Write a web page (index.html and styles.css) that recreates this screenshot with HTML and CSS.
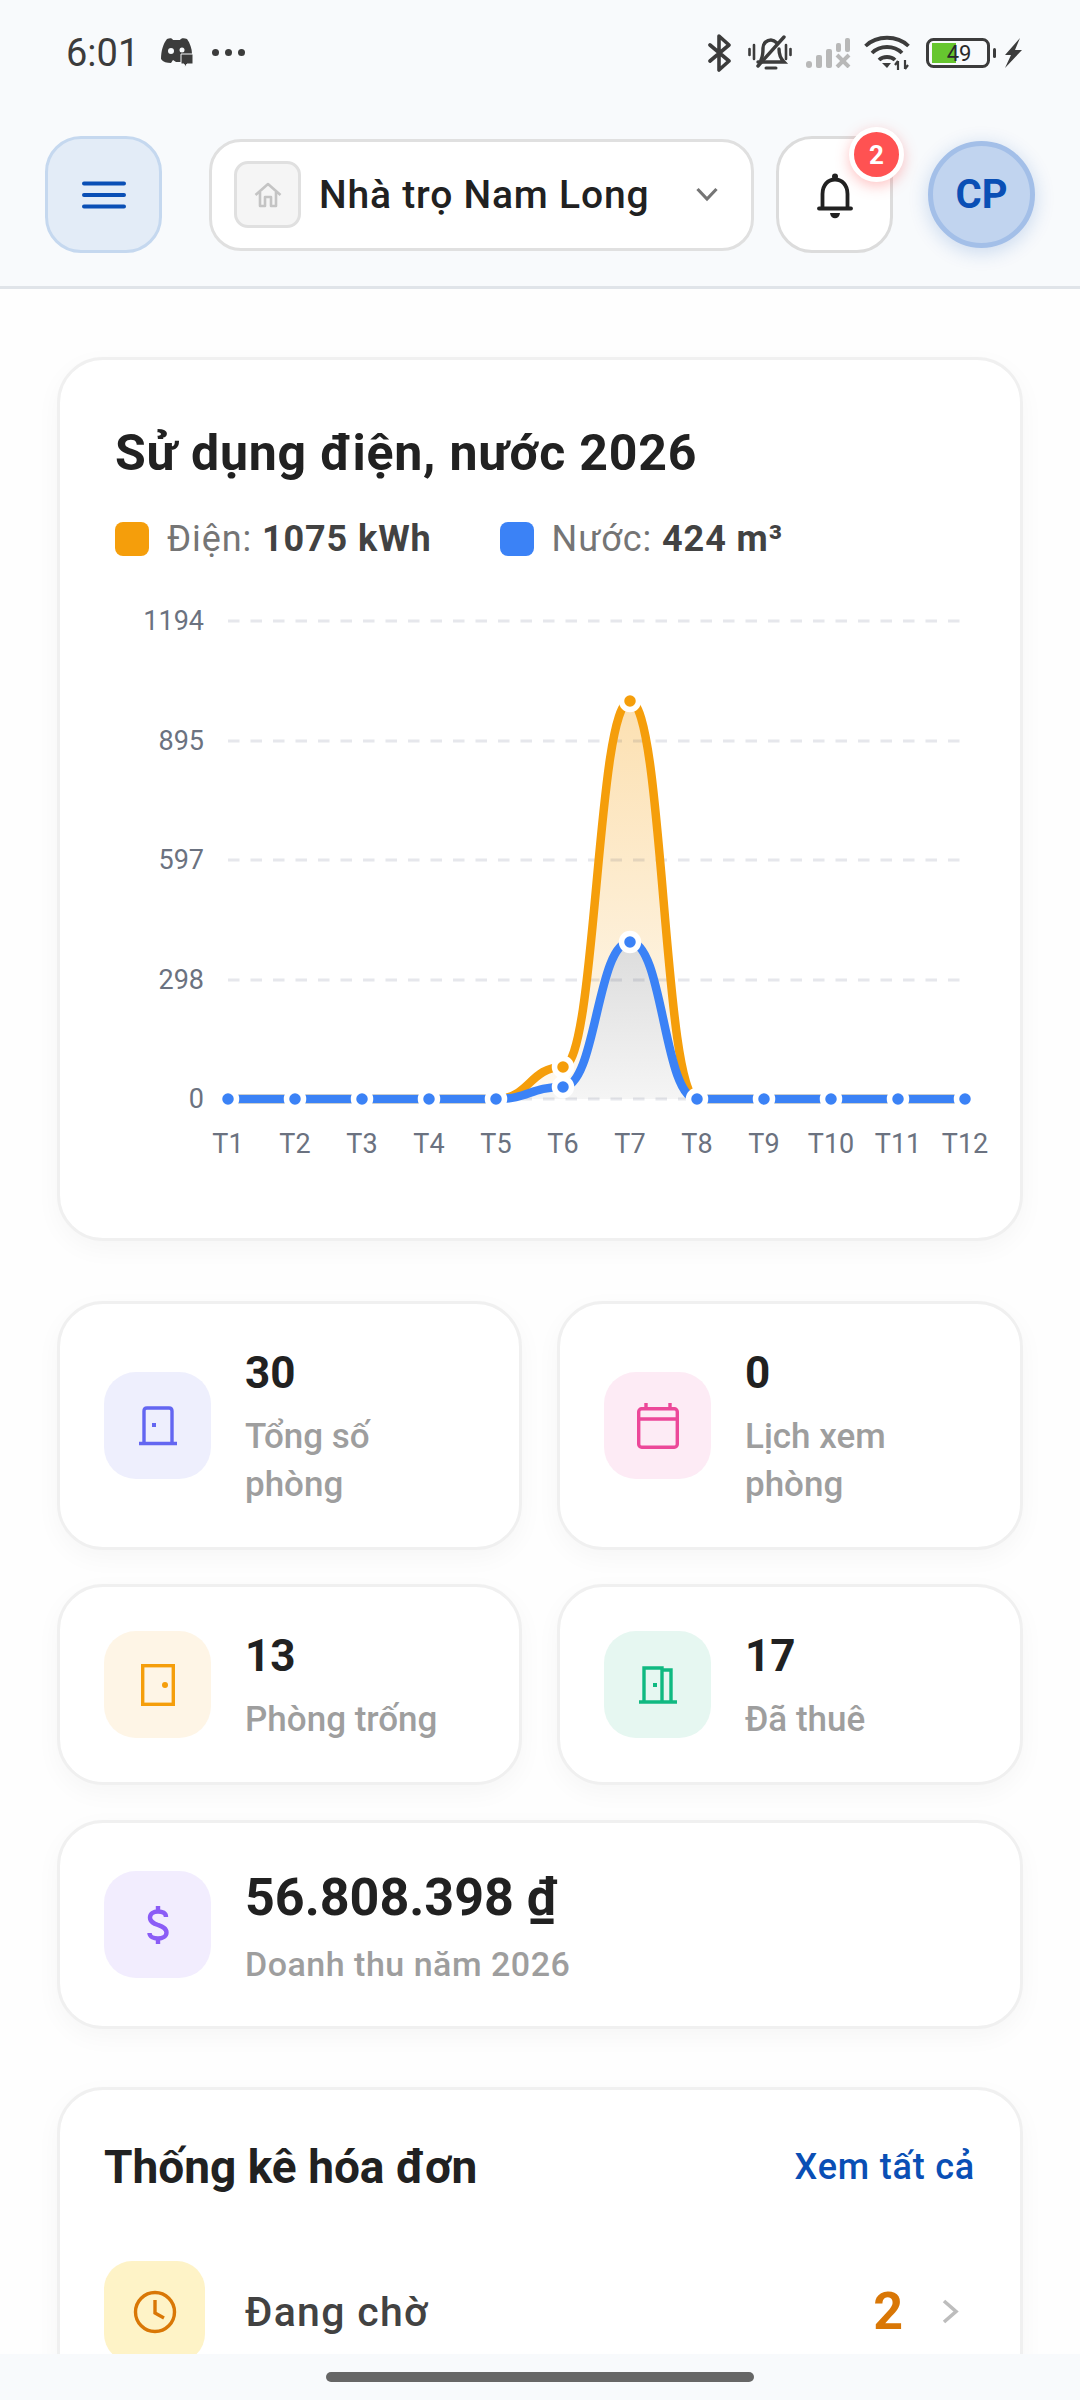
FILE: index.html
```html
<!DOCTYPE html>
<html lang="vi">
<head>
  <meta charset="UTF-8">
  <meta name="viewport" content="width=device-width, initial-scale=1.0">
  <title>Nhà trọ Nam Long</title>
  <link rel="stylesheet" href="styles.css">
</head>
<body>
<div class="screen">

  <div class="top">
    <div class="status-bar">
      <span class="clock">6:01</span>
      <svg class="st-discord" width="34" height="30" viewBox="0 0 34 30">
        <path fill="#3c3c3c" d="M7 2 C10 1 12 1 13 3 H20 C21 1 24 1 27 2 C30 6 32 12 32 17 H24 V25 H16 L13 23 L11 26 C7 26 3 25 1 22 C1 14 3 7 7 2 Z"/>
        <circle cx="11" cy="14" r="3" fill="#f8fafc"/>
        <circle cx="22" cy="13" r="2.5" fill="#f8fafc"/>
        <path fill="#3c3c3c" d="M21 17 H33 V27 H27 L25 30 L24 27 H21 Z" stroke="#f8fafc" stroke-width="1"/>
      </svg>
      <span class="st-dots"><i></i><i></i><i></i></span>
      <span class="st-right">
        <svg width="24" height="40" viewBox="0 0 24 40" fill="none" stroke="#3c3c3c" stroke-width="3.6" stroke-linejoin="round" stroke-linecap="round">
          <path d="M2 12 L21 28 L11 37 V3 L21 12 L2 28"/>
        </svg>
        <svg class="st-mute" width="44" height="38" viewBox="0 0 44 38" fill="none" stroke="#3c3c3c" stroke-width="3.4" stroke-linecap="round">
          <path d="M13 26 C15 22 15 18 15 14 C15 9 19 6 23 6 C25 6 27 7 29 9"/>
          <path d="M31 15 C31 20 32 24 36 28 H10"/>
          <path d="M10 32 L36 3"/>
          <path d="M18 34 H28" stroke-width="3"/>
          <path d="M1.5 15 V21 M6 11 V25 M38 11 V25 M42.5 15 V21" stroke-width="2.6"/>
        </svg>
        <svg class="st-signal" width="45" height="30" viewBox="0 0 45 30" fill="#b8b8b8">
          <rect x="0" y="23" width="6" height="7" rx="3"/>
          <rect x="10" y="17" width="6" height="13" rx="2"/>
          <rect x="20" y="11" width="6" height="19" rx="2"/>
          <rect x="30" y="5" width="5" height="9" rx="2"/>
          <rect x="39" y="0" width="5" height="14" rx="2"/>
          <path d="M31 17 L43 29 M43 17 L31 29" stroke="#b8b8b8" stroke-width="4" fill="none"/>
        </svg>
        <svg class="st-wifi" width="46" height="36" viewBox="0 0 46 36" fill="none" stroke="#3c3c3c" stroke-width="3.8">
          <path d="M1.5 11 C13 0 33 0 44.5 11"/>
          <path d="M8 18 C16 10 30 10 38 18"/>
          <path d="M15 25 C19 21 27 21 31 25"/>
          <path d="M18 28 L23 33 L27 28 Z" fill="#3c3c3c" stroke="none"/>
          <path d="M34 26 V35 M31 30 L34 26 M41 25 V34 M41 34 L44 30" stroke-width="2.2"/>
        </svg>
        <svg class="st-battery" width="70" height="30" viewBox="0 0 70 30">
          <rect x="1.5" y="1.5" width="61" height="27" rx="6" fill="none" stroke="#3c3c3c" stroke-width="3"/>
          <rect x="6" y="5" width="24" height="20" fill="#66c62f"/>
          <rect x="67" y="10" width="3" height="10" rx="1.5" fill="#3c3c3c"/>
          <text class="batt-text" x="33" y="23" text-anchor="middle">49</text>
        </svg>
        <svg width="19" height="30" viewBox="0 0 19 30">
          <path fill="#3c3c3c" d="M17 0 L2 17 H8 L2 30 L19 12 H12 Z"/>
        </svg>
      </span>
    </div>

    <header class="app-header">
      <div class="menu-btn">
        <svg width="44" height="30" viewBox="0 0 44 30" stroke="#0a4fb5" stroke-width="4" stroke-linecap="round">
          <path d="M2 3.5 H42 M2 15 H42 M2 26.5 H42"/>
        </svg>
      </div>
      <div class="house-select">
        <span class="house-icon">
          <svg width="28" height="26" viewBox="0 0 28 26" fill="none" stroke="#c4c4c4" stroke-width="2.6" stroke-linejoin="round">
            <path d="M1.5 13 L14 2 L26.5 13 M6 10 V24 H11 V15 H17 V24 H22 V10"/>
          </svg>
        </span>
        <span class="house-name">Nhà trọ Nam Long</span>
        <svg class="caret" width="22" height="15" viewBox="0 0 22 15" fill="none" stroke="#757575" stroke-width="3.2">
          <path d="M1.5 2 L11 12 L20.5 2"/>
        </svg>
      </div>
      <div class="bell-btn">
        <svg width="36" height="46" viewBox="0 0 36 46" fill="none" stroke="#212121" stroke-width="3.8" stroke-linecap="round">
          <path d="M5.5 34 V21 C5.5 12 11 6.5 18 6.5 C25 6.5 30.5 12 30.5 21 V34"/>
          <path d="M2 35.5 H34"/>
          <circle cx="18" cy="3.5" r="3" fill="#212121" stroke="none"/>
          <path d="M13 40 H23 C22.5 47 13.5 47 13 40 Z" fill="#212121" stroke="none"/>
        </svg>
        <span class="bell-badge">2</span>
      </div>
      <div class="avatar">CP</div>
    </header>
  </div>

  <main class="content">
    <section class="card chart-card">
      <h2 class="chart-title">Sử dụng điện, nước 2026</h2>
      <div class="legend">
        <span class="legend-item"><i class="swatch swatch-orange"></i><span>Điện: <b>1075 kWh</b></span></span>
        <span class="legend-item"><i class="swatch swatch-blue"></i><span>Nước: <b>424 m³</b></span></span>
      </div>
      <svg class="chart" width="884" height="580" viewBox="116 600 884 580">
        <defs>
          <linearGradient id="fillDien" x1="0" y1="701" x2="0" y2="1099" gradientUnits="userSpaceOnUse">
            <stop offset="0" stop-color="#f59e0b" stop-opacity="0.32"/>
            <stop offset="1" stop-color="#f59e0b" stop-opacity="0.06"/>
          </linearGradient>
          <linearGradient id="fillNuoc" x1="0" y1="942" x2="0" y2="1099" gradientUnits="userSpaceOnUse">
            <stop offset="0" stop-color="#dcdcdc"/>
            <stop offset="1" stop-color="#f5f5f5"/>
          </linearGradient>
        </defs>

        <path fill="url(#fillDien)" d="M496 1099 C529.5 1099 529.5 1067 563 1067 C596.5 1067 596.5 701 630 701 C663.5 701 663.5 1099 697 1099 Z"/>
        <path fill="url(#fillNuoc)" d="M496 1099 C529.5 1099 529.5 1087 563 1087 C596.5 1087 596.5 942 630 942 C663.5 942 663.5 1099 697 1099 Z"/>

        <g class="grid-lines">
          <path d="M228 621 H960"/>
          <path d="M228 741 H960"/>
          <path d="M228 860 H960"/>
          <path d="M228 980 H960"/>
          <path d="M228 1099 H960"/>
        </g>

        <g class="y-labels">
          <text x="204" y="630">1194</text>
          <text x="204" y="750">895</text>
          <text x="204" y="869">597</text>
          <text x="204" y="989">298</text>
          <text x="204" y="1108">0</text>
        </g>
        <g class="x-labels">
          <text x="228" y="1153">T1</text>
          <text x="295" y="1153">T2</text>
          <text x="362" y="1153">T3</text>
          <text x="429" y="1153">T4</text>
          <text x="496" y="1153">T5</text>
          <text x="563" y="1153">T6</text>
          <text x="630" y="1153">T7</text>
          <text x="697" y="1153">T8</text>
          <text x="764" y="1153">T9</text>
          <text x="831" y="1153">T10</text>
          <text x="898" y="1153">T11</text>
          <text x="965" y="1153">T12</text>
        </g>

        <path class="line line-orange" d="M228 1099 H496 C529.5 1099 529.5 1067 563 1067 C596.5 1067 596.5 701 630 701 C663.5 701 663.5 1099 697 1099 H965"/>
        <g class="dots dots-orange">
          <circle cx="563" cy="1067" r="8.500"/>
          <circle cx="630" cy="701" r="8.500"/>
        </g>
        <path class="line line-blue" d="M228 1099 H496 C529.5 1099 529.5 1087 563 1087 C596.5 1087 596.5 942 630 942 C663.5 942 663.5 1099 697 1099 H965"/>
        <g class="dots dots-blue">
          <circle cx="228" cy="1099" r="8.500"/>
          <circle cx="295" cy="1099" r="8.500"/>
          <circle cx="362" cy="1099" r="8.500"/>
          <circle cx="429" cy="1099" r="8.500"/>
          <circle cx="496" cy="1099" r="8.500"/>
          <circle cx="563" cy="1087" r="8.500"/>
          <circle cx="630" cy="942" r="8.500"/>
          <circle cx="697" cy="1099" r="8.500"/>
          <circle cx="764" cy="1099" r="8.500"/>
          <circle cx="831" cy="1099" r="8.500"/>
          <circle cx="898" cy="1099" r="8.500"/>
          <circle cx="965" cy="1099" r="8.500"/>
        </g>
      </svg>
    </section>

    <section class="stats">
      <div class="card stat">
        <span class="stat-icon bg-indigo">
          <svg width="40" height="40" viewBox="0 0 40 40" fill="none" stroke="#6366f1" stroke-width="3.4">
            <path d="M6 37 V5 C6 3 7 2 9 2 H31 C33 2 34 3 34 5 V37"/>
            <path d="M1 37.5 H39"/>
            <rect x="14" y="17" width="4" height="4" fill="#6366f1" stroke="none"/>
          </svg>
        </span>
        <div class="stat-text">
          <div class="stat-num">30</div>
          <div class="stat-label">Tổng số<br>phòng</div>
        </div>
      </div>
      <div class="card stat">
        <span class="stat-icon bg-pink">
          <svg width="42" height="46" viewBox="0 0 42 46" fill="none" stroke="#ec4899" stroke-width="3.4">
            <rect x="1.7" y="5.7" width="38.6" height="38.6" rx="3"/>
            <path d="M2 16 H40 M9 0 V6 M33 0 V6"/>
          </svg>
        </span>
        <div class="stat-text">
          <div class="stat-num">0</div>
          <div class="stat-label">Lịch xem<br>phòng</div>
        </div>
      </div>
      <div class="card stat">
        <span class="stat-icon bg-orange">
          <svg width="34" height="42" viewBox="0 0 34 42" fill="none" stroke="#f59e0b" stroke-width="3.4">
            <rect x="1.7" y="1.7" width="30.6" height="38.6"/>
            <circle cx="24" cy="21" r="3" fill="#f59e0b" stroke="none"/>
          </svg>
        </span>
        <div class="stat-text">
          <div class="stat-num">13</div>
          <div class="stat-label">Phòng trống</div>
        </div>
      </div>
      <div class="card stat">
        <span class="stat-icon bg-green">
          <svg width="40" height="38" viewBox="0 0 40 38" fill="none" stroke="#10b981" stroke-width="3.4">
            <path d="M6 36 V2 H24 V36"/>
            <path d="M24 4 H33 V36"/>
            <path d="M1 36 H39"/>
            <rect x="15" y="17" width="4" height="4" fill="#10b981" stroke="none"/>
          </svg>
        </span>
        <div class="stat-text">
          <div class="stat-num">17</div>
          <div class="stat-label">Đã thuê</div>
        </div>
      </div>
    </section>

    <section class="card revenue">
      <span class="stat-icon bg-purple">
        <svg width="24" height="40" viewBox="0 0 24 40" fill="none" stroke="#8b5cf6" stroke-width="4.4">
          <path d="M20 12 C20 8 16.500 6.500 12 6.500 C7.500 6.500 4 8.500 4 12.500 C4 17 8 18.500 12 20 C16 21.500 20.500 23 20.500 27.500 C20.500 31.500 16.500 33.500 12 33.500 C7.500 33.500 3.500 31.500 3.500 28"/>
          <path d="M12 1 V6 M12 34 V39"/>
        </svg>
      </span>
      <div class="revenue-text">
        <div class="revenue-num">56.808.398 ₫</div>
        <div class="revenue-label">Doanh thu năm 2026</div>
      </div>
    </section>

    <section class="card invoices">
      <div class="invoices-head">
        <h3 class="invoices-title">Thống kê hóa đơn</h3>
        <span class="see-all">Xem tất cả</span>
      </div>
      <div class="invoice-row">
        <span class="invoice-icon">
          <svg width="44" height="44" viewBox="0 0 44 44" fill="none" stroke="#d97706" stroke-width="3.4">
            <circle cx="22" cy="22" r="19.500"/>
            <path d="M22 10 V23 L31 28"/>
          </svg>
        </span>
        <span class="invoice-name">Đang chờ</span>
        <span class="invoice-count">2</span>
        <svg class="invoice-arrow" width="17" height="25" viewBox="0 0 17 25" fill="none" stroke="#bdbdbd" stroke-width="3.6">
          <path d="M2 2 L14 12.500 L2 23"/>
        </svg>
      </div>
    </section>
  </main>

  <div class="nav-bar"><span class="nav-pill"></span></div>
</div>
</body>
</html>
```

FILE: styles.css
```css
* {
  box-sizing: border-box;
}

body {
  margin: 0;
  padding: 0;
  font-family: Roboto, "Noto Sans", sans-serif;
  background-color: #fefefe;
  color: #212121;
}

.screen {
  width: 1080px;
  height: 2400px;
  display: flex;
  flex-direction: column;
  overflow: hidden;
}

/* Status bar + header */
.top {
  background-color: #f8fafc;
  border-bottom: 3px solid #e0e4e9;
  flex-shrink: 0;
}

.status-bar {
  height: 105px;
  display: flex;
  align-items: center;
  padding-left: 66px;
}

.clock {
  font-size: 38px;
  color: #3c3c3c;
  width: 94px;
}

.st-discord {
  margin-top: -1px;
}

.st-dots {
  display: flex;
  gap: 6px;
  margin-left: 18px;
}

.st-dots i {
  width: 7px;
  height: 7px;
  border-radius: 50%;
  background-color: #3c3c3c;
}

.st-right {
  margin-left: auto;
  display: flex;
  align-items: center;
  padding-right: 58px;
}

.st-mute {
  margin-left: 16px;
}

.st-signal {
  margin-left: 14px;
}

.st-wifi {
  margin-left: 13px;
}

.st-battery {
  margin-left: 16px;
  margin-right: 7px;
}

.batt-text {
  font-size: 22px;
  font-family: Roboto, sans-serif;
  fill: #2a2a2a;
}

.app-header {
  display: flex;
  align-items: center;
  padding: 31px 0 33px 45px;
}

.menu-btn {
  width: 117px;
  height: 117px;
  border-radius: 36px;
  background-color: #e3ecf7;
  border: 3px solid #c5d8ef;
  display: flex;
  align-items: center;
  justify-content: center;
}

.house-select {
  width: 545px;
  height: 112px;
  margin-left: 47px;
  background-color: #fff;
  border: 3px solid #e0e0e0;
  border-radius: 32px;
  display: flex;
  align-items: center;
  padding-left: 22px;
}

.house-icon {
  width: 67px;
  height: 67px;
  border-radius: 14px;
  background-color: #f5f5f5;
  border: 3px solid #e0e0e0;
  display: flex;
  align-items: center;
  justify-content: center;
}

.house-name {
  font-size: 39px;
  font-weight: 500;
  margin-left: 18px;
  letter-spacing: 0.8px;
  white-space: nowrap;
}

.caret {
  margin-left: auto;
  margin-right: 33px;
}

.bell-btn {
  position: relative;
  width: 117px;
  height: 117px;
  margin-left: 22px;
  background-color: #fff;
  border: 3px solid #dcdcdc;
  border-radius: 36px;
  display: flex;
  align-items: center;
  justify-content: center;
  padding-top: 2px;
}

.bell-badge {
  position: absolute;
  left: 70px;
  top: -12px;
  width: 55px;
  height: 55px;
  border-radius: 50%;
  background-color: #ff5252;
  border: 5px solid #fff;
  box-shadow: 0 4px 14px rgba(255, 82, 82, 0.35);
  color: #fff;
  font-size: 26px;
  font-weight: 700;
  display: flex;
  align-items: center;
  justify-content: center;
}

.avatar {
  width: 107px;
  height: 107px;
  margin-left: 35px;
  border-radius: 50%;
  background-color: #c1d4ef;
  border: 5px solid #a3bfe8;
  box-shadow: 0 4px 20px rgba(10, 79, 181, 0.2);
  color: #0a4fb5;
  font-size: 40px;
  font-weight: 700;
  display: flex;
  align-items: center;
  justify-content: center;
}

/* Content */
.content {
  flex: 1;
  min-height: 0;
  overflow: hidden;
  padding: 68px 57px 0;
}

.card {
  background-color: #fff;
  border: 3px solid #f0f0f0;
  border-radius: 46px;
  box-shadow: 0 8px 26px rgba(0, 0, 0, 0.035);
}

.chart-card {
  height: 884px;
  padding: 63px 0 0 55px;
}

.chart-title {
  margin: 0;
  font-size: 50px;
  line-height: 60px;
  font-weight: 700;
  letter-spacing: 0.8px;
}

.legend {
  display: flex;
  gap: 68px;
  margin-top: 36px;
}

.legend-item {
  display: flex;
  align-items: center;
  gap: 18px;
  font-size: 36px;
  line-height: 40px;
  letter-spacing: 0.9px;
  color: #757575;
}

.legend-item b {
  color: #424242;
  font-weight: 700;
}

.swatch {
  width: 34px;
  height: 34px;
  border-radius: 8px;
}

.swatch-orange {
  background-color: #f59e0b;
}

.swatch-blue {
  background-color: #3b82f6;
}

.chart {
  display: block;
  margin: 41px 0 0 1px;
}

.grid-lines path {
  stroke: rgba(30, 40, 80, 0.11);
  stroke-width: 3;
  stroke-dasharray: 11.500 11;
  fill: none;
}

.y-labels text {
  font-size: 27px;
  fill: #6b7280;
  text-anchor: end;
}

.x-labels text {
  font-size: 27px;
  fill: #6b7280;
  text-anchor: middle;
}

.line {
  fill: none;
  stroke-width: 8.500;
}

.line-orange {
  stroke: #f59e0b;
}

.line-blue {
  stroke: #3b82f6;
}

.dots circle {
  stroke: #fff;
  stroke-width: 5.500;
}

.dots-orange circle {
  fill: #f59e0b;
}

.dots-blue circle {
  fill: #3b82f6;
}

.stats {
  display: grid;
  grid-template-columns: 465px 466px;
  column-gap: 35px;
  row-gap: 34px;
  margin-top: 60px;
}

.stat {
  display: flex;
  align-items: center;
  gap: 34px;
  padding: 38px 44px;
}

.stat-icon {
  width: 107px;
  height: 107px;
  border-radius: 32px;
  flex-shrink: 0;
  display: flex;
  align-items: center;
  justify-content: center;
}

.bg-indigo {
  background-color: #eeeffd;
}

.bg-pink {
  background-color: #fdebf5;
}

.bg-orange {
  background-color: #fef5e6;
}

.bg-green {
  background-color: #e6f7f1;
}

.bg-purple {
  background-color: #f2edfe;
}

.stat-num {
  font-size: 44px;
  line-height: 62px;
  font-weight: 700;
}

.stat-label {
  margin-top: 9px;
  font-size: 35px;
  line-height: 48px;
  font-weight: 500;
  color: #9e9e9e;
}

.revenue {
  display: flex;
  align-items: center;
  gap: 34px;
  padding: 40px 44px;
  margin-top: 35px;
  height: 209px;
}

.revenue-num {
  font-size: 52px;
  line-height: 64px;
  font-weight: 700;
  padding-top: 3px;
}

.revenue-label {
  margin-top: 12px;
  font-size: 34px;
  line-height: 44px;
  font-weight: 500;
  color: #9e9e9e;
  letter-spacing: 0.5px;
}

.invoices {
  margin-top: 58px;
  padding: 47px 45px 40px 44px;
}

.invoices-head {
  display: flex;
  align-items: center;
  justify-content: space-between;
}

.invoices-title {
  margin: 0;
  font-size: 46px;
  line-height: 60px;
  font-weight: 700;
}

.see-all {
  font-size: 36px;
  font-weight: 500;
  letter-spacing: 0.8px;
  color: #0a4fb5;
}

.invoice-row {
  display: flex;
  align-items: center;
  margin-top: 64px;
}

.invoice-icon {
  width: 101px;
  height: 101px;
  border-radius: 28px;
  background-color: #fef3c7;
  display: flex;
  align-items: center;
  justify-content: center;
}

.invoice-name {
  margin-left: 40px;
  font-size: 41px;
  font-weight: 500;
  letter-spacing: 1.3px;
  color: #424242;
}

.invoice-count {
  margin-left: auto;
  font-size: 52px;
  font-weight: 700;
  color: #d97706;
}

.invoice-arrow {
  margin-left: 39px;
  margin-right: 16px;
}

/* Bottom gesture bar */
.nav-bar {
  height: 46px;
  background-color: #f8fafc;
  flex-shrink: 0;
  display: flex;
  justify-content: center;
  padding-top: 18px;
}

.nav-pill {
  width: 428px;
  height: 10px;
  border-radius: 5px;
  background-color: #666;
}
```
